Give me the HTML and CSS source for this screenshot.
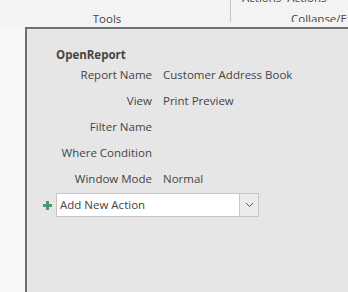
FILE: index.html
```html
<!DOCTYPE html>
<html lang="en">
<head>
    <meta charset="UTF-8">
    <title>Macro Designer</title>
    <link rel="stylesheet" href="styles.css">
</head>
<body>
    <div class="ribbon">
        <div class="group tools">
            <span class="group-label">Tools</span>
        </div>
        <div class="group collapse">
            <span class="buttons">Actions&nbsp; Actions</span>
            <span class="group-label">Collapse/Expand</span>
        </div>
    </div>
    <div class="workspace">
        <div class="nav-strip"></div>
        <div class="designer">
            <div class="action-block">
                <div class="action-name">OpenReport</div>
                <div class="args">
                    <div class="arg-label">Report Name</div>
                    <div class="arg-value">Customer Address Book</div>
                    <div class="arg-label">View</div>
                    <div class="arg-value">Print Preview</div>
                    <div class="arg-label">Filter Name</div>
                    <div class="arg-value"></div>
                    <div class="arg-label">Where Condition</div>
                    <div class="arg-value"></div>
                    <div class="arg-label">Window Mode</div>
                    <div class="arg-value">Normal</div>
                </div>
            </div>
            <div class="add-row">
                <span class="plus"></span>
                <div class="combo">
                    <span class="combo-text">Add New Action</span>
                    <span class="combo-btn">
                        <svg width="9" height="6" viewBox="0 0 9 6"><path d="M1 1 L4.5 4.5 L8 1" fill="none" stroke="#555" stroke-width="1"/></svg>
                    </span>
                </div>
            </div>
        </div>
    </div>
</body>
</html>
```
FILE: styles.css
```css
html, body {
    margin: 0;
    height: 100%;
}
body {
    font-family: "Open Sans", "Noto Sans", sans-serif;
    font-size: 11.5px;
    color: #444;
    background-color: #f7f7f7;
    display: flex;
    flex-direction: column;
    overflow: hidden;
}
.ribbon {
    display: flex;
    height: 27px;
    background-color: #f3f3f3;
    flex-shrink: 0;
}
.group {
    position: relative;
    height: 22px;
}
.tools {
    width: 230px;
    border-right: 1px solid #c6c6c6;
    text-align: center;
}
.tools .group-label {
    display: block;
    padding-right: 16px;
    line-height: 38px;
}
.collapse {
    flex: 1;
    white-space: nowrap;
    overflow: hidden;
}
.collapse .buttons {
    position: absolute;
    left: 11px;
    top: -10px;
}
.collapse .group-label {
    position: absolute;
    left: 60px;
    top: 11px;
}
.workspace {
    flex: 1;
    display: flex;
}
.nav-strip {
    width: 25px;
    background-color: #f7f7f7;
}
.designer {
    flex: 1;
    background-color: #e6e6e6;
    border-left: 2px solid #6f6f6f;
    border-top: 2px solid #6f6f6f;
    padding: 18px 0 0 29px;
}
.action-name {
    font-weight: bold;
    color: #444;
    margin-bottom: -1px;
}
.args {
    display: grid;
    grid-template-columns: 96px auto;
    column-gap: 11px;
    grid-auto-rows: 26px;
    align-items: center;
}
.arg-label {
    text-align: right;
}
.add-row {
    display: flex;
    align-items: center;
    margin-left: -13px;
    margin-top: 2px;
}
.plus {
    position: relative;
    width: 9px;
    height: 9px;
    margin-right: 4px;
}
.plus::before,
.plus::after {
    content: "";
    position: absolute;
    background-color: #4a9a6c;
}
.plus::before {
    left: 3px;
    top: 0;
    width: 3px;
    height: 9px;
}
.plus::after {
    left: 0;
    top: 3px;
    width: 9px;
    height: 3px;
}
.combo {
    display: flex;
    width: 201px;
    height: 22px;
    border: 1px solid #c6c6c6;
    background-color: #fff;
}
.combo-text {
    flex: 1;
    padding-left: 3px;
    line-height: 22px;
    color: #444;
}
.combo-btn {
    width: 18px;
    border-left: 1px solid #c6c6c6;
    background-color: #ececec;
    display: flex;
    align-items: center;
    justify-content: center;
}
```
